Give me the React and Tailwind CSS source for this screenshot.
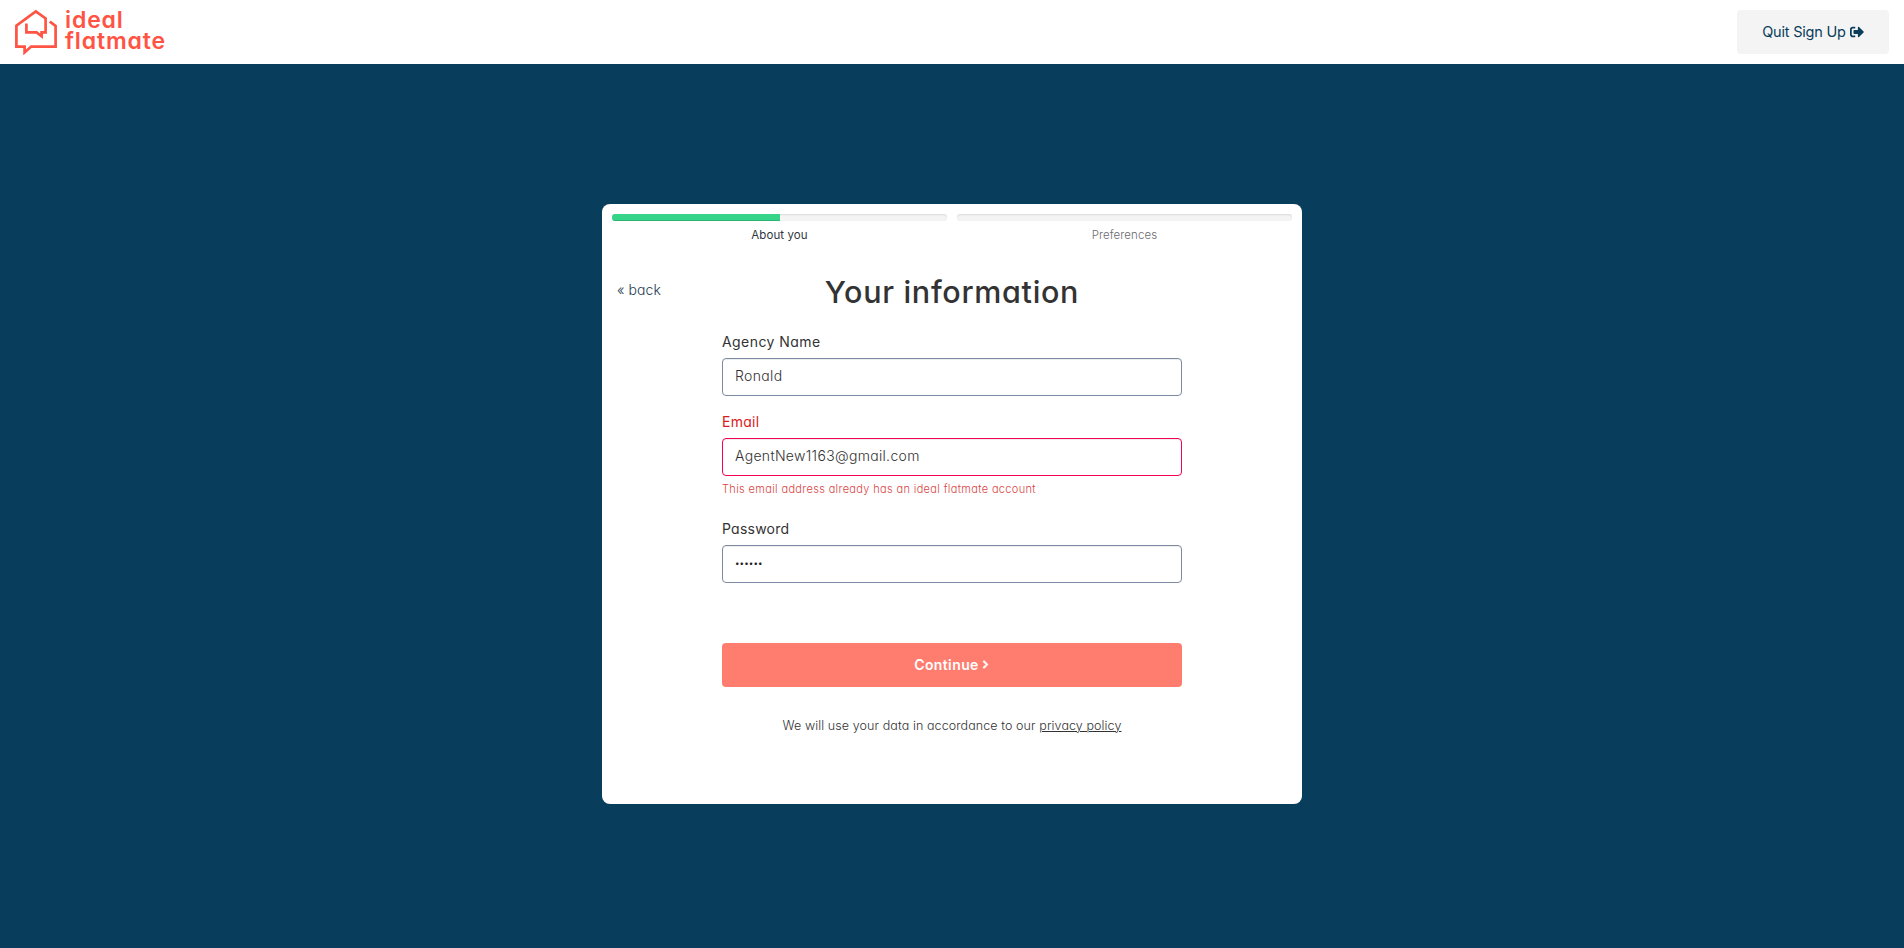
import { FaSignOutAlt, FaChevronRight } from "react-icons/fa";

function Logo() {
  return (
    <a href="#" className="flex items-center gap-[7px] text-[#ff5443]">
      <svg width="44" height="46" viewBox="14 9 44 46" fill="none" stroke="currentColor" strokeWidth="2.7">
        <path d="M49.8 21.6 L55.6 26 V46.6 H31.2 L24.6 52.4 V46.6 H16.4 V25.6 L35.8 11.4 L45.6 18.4 V32.4 H41.6 V36.2 L36.6 32.4 H26.4 V23.6" />
      </svg>
      <span className="-mt-[2px] text-[23px] leading-[21px] font-semibold tracking-[0.88px]">
        ideal
        <br />
        flatmate
      </span>
    </a>
  );
}

function Step({ label, done, active }) {
  return (
    <div className="flex-1">
      <div className="h-[7px] overflow-hidden rounded-[3px] bg-[#f4f4f4] shadow-[inset_0_1px_2px_rgba(0,0,0,0.1)]">
        <div className="h-full bg-[#36d489] shadow-[inset_0_-1px_0_rgba(0,0,0,0.15)]" style={{ width: `${done}%` }} />
      </div>
      <div
        className={
          active
            ? "mt-[6px] text-center text-[11.5px] leading-4 tracking-[0.1px] text-[#2f3640]"
            : "mt-[6px] text-center text-[11.5px] leading-4 font-light tracking-[0.08px] text-[#6b6b70]"
        }
      >
        {label}
      </div>
    </div>
  );
}

export default function App() {
  return (
    <div className="flex h-[948px] flex-col overflow-hidden bg-[#083d5b] font-['Inter',sans-serif] text-[#333] [font-feature-settings:'cv11']">
      <header className="flex h-16 shrink-0 items-center justify-between bg-white pr-[15px] pl-[14px]">
        <Logo />
        <button className="flex h-11 w-[152px] items-center justify-center gap-[4px] rounded-[4px] bg-[#f4f4f4] text-[14.5px] tracking-[-0.2px] whitespace-nowrap text-[#093d5b]">
          Quit Sign Up
          <FaSignOutAlt size={14} />
        </button>
      </header>

      <main className="mx-auto mt-[140px] h-[600px] w-[700px] shrink-0 rounded-[8px] bg-white px-[10px] pt-[10px]">
        <div className="flex gap-[10px]">
          <Step label="About you" done={50} active />
          <Step label="Preferences" done={0} />
        </div>

        <div className="mt-[29px] grid h-10 grid-cols-[1fr_auto_1fr] items-center">
          <a href="#" className="-mt-[6px] pl-[5px] text-[14px] font-light tracking-[0.08px] text-[#1d3b50]">« back</a>
          <h1 className="text-[30.5px] leading-10 font-medium tracking-[0.68px]">Your information</h1>
        </div>

        <form className="mx-auto w-[460px] pt-5">
          <label className="block text-[14px] leading-5 tracking-[0.43px]">Agency Name</label>
          <input
            defaultValue="Ronald"
            className="mt-[6px] block h-[38px] w-full rounded-[4px] border border-[#7b8ba3] px-3 pb-[3px] text-[14px] font-light tracking-[0.36px] text-[#333] shadow-[inset_0_1px_1px_rgba(0,0,0,0.075)]"
          />

          <label className="mt-4 block text-[14px] leading-5 tracking-[0.29px] text-[#d91c1c]">Email</label>
          <input
            defaultValue="AgentNew1163@gmail.com"
            className="mt-[6px] block h-[38px] w-full rounded-[4px] border border-[#f50057] px-3 pb-[3px] text-[14px] font-light tracking-[0.32px] text-[#333] shadow-[inset_0_1px_1px_rgba(0,0,0,0.075)]"
          />
          <p className="mt-[5px] text-[11px] leading-4 font-light tracking-[0.345px] text-[#d94646]">
            This email address already has an ideal flatmate account
          </p>

          <label className="mt-[22px] block text-[14px] leading-5 tracking-[0.24px]">Password</label>
          <input
            type="password"
            defaultValue="secret"
            className="mt-[6px] block h-[38px] w-full rounded-[4px] border border-[#7b8ba3] px-3 pb-[2px] text-[8px] tracking-[0.1px] text-[#222] shadow-[inset_0_1px_1px_rgba(0,0,0,0.075)]"
          />

          <button
            type="button"
            className="mt-[60px] flex h-11 w-full items-center justify-center gap-[2px] rounded-[4px] bg-[#ff7d6f] pb-[2px] text-[14px] font-semibold tracking-[0.4px] text-white"
          >
            Continue
            <FaChevronRight size={9} stroke="currentColor" strokeWidth={50} />
          </button>
        </form>

        <p className="mt-[29px] text-center text-[12.5px] leading-5 font-light tracking-[0.09px]">
          We will use your data in accordance to our{" "}
          <a href="#" className="underline decoration-1 underline-offset-1">privacy policy</a>
        </p>
      </main>
    </div>
  );
}
